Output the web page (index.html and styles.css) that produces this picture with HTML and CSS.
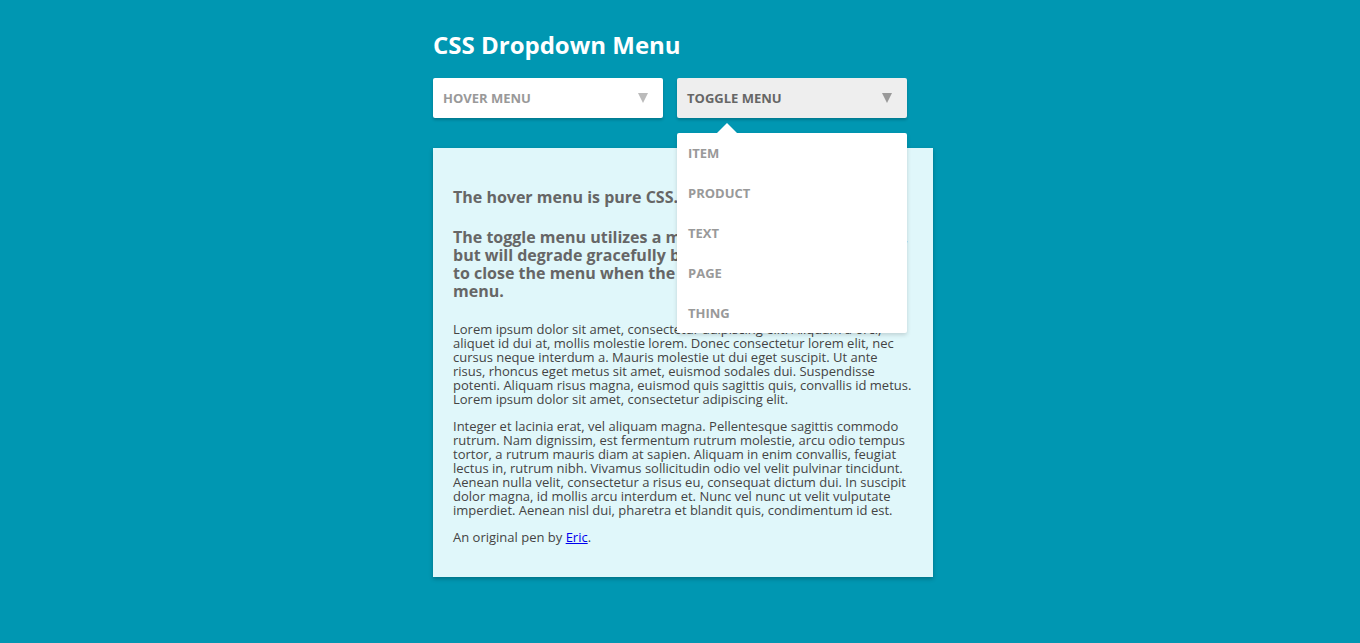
FILE: index.html
```html
<!DOCTYPE html>
<html>
<head>
<meta charset="utf-8">
<link rel="stylesheet" href="styles.css">
</head>
<body>
<div class="wrap">
  <h1 class="title">CSS Dropdown Menu</h1>
  <div class="menus">
    <div class="menu hover">
      <span>Hover Menu</span>
      <span class="caret"></span>
    </div>
    <div class="menu toggle">
      <span>Toggle Menu</span>
      <span class="caret"></span>
      <ul class="dropdown">
        <li>Item</li>
        <li>Product</li>
        <li>Text</li>
        <li>Page</li>
        <li>Thing</li>
      </ul>
    </div>
  </div>
  <div class="content">
    <h3>The hover menu is pure CSS.</h3>
    <h3>The toggle menu utilizes a minimal amount of JavaScript,<br>but will degrade gracefully back to a hover. JavaScript<br>to close the menu when the user clicks off the<br>menu.</h3>
    <p>Lorem ipsum dolor sit amet, consectetur adipiscing elit. Aliquam a orci, aliquet id dui at, mollis molestie lorem. Donec consectetur lorem elit, nec cursus neque interdum a. Mauris molestie ut dui eget suscipit. Ut ante risus, rhoncus eget metus sit amet, euismod sodales dui. Suspendisse potenti. Aliquam risus magna, euismod quis sagittis quis, convallis id metus. Lorem ipsum dolor sit amet, consectetur adipiscing elit.</p>
    <p>Integer et lacinia erat, vel aliquam magna. Pellentesque sagittis commodo rutrum. Nam dignissim, est fermentum rutrum molestie, arcu odio tempus tortor, a rutrum mauris diam at sapien. Aliquam in enim convallis, feugiat lectus in, rutrum nibh. Vivamus sollicitudin odio vel velit pulvinar tincidunt. Aenean nulla velit, consectetur a risus eu, consequat dictum dui. In suscipit dolor magna, id mollis arcu interdum et. Nunc vel nunc ut velit vulputate imperdiet. Aenean nisl dui, pharetra et blandit quis, condimentum id est.</p>
    <p>An original pen by <a href="#">Eric</a>.</p>
  </div>
</div>
</body>
</html>
```

FILE: styles.css
```css
html, body {
  margin: 0;
  padding: 0;
}
body {
  background: #0097b2;
  font-family: "Open Sans", "Liberation Sans", sans-serif;
  height: 643px;
  overflow: hidden;
}
.wrap {
  width: 500px;
  margin-left: 433px;
  padding-top: 28px;
}
.title {
  margin: 0;
  font-size: 24px;
  line-height: 33px;
  font-weight: 700;
  color: #fff;
}
.menus {
  display: flex;
  gap: 14px;
  margin-top: 17px;
}
.menu {
  position: relative;
  width: 230px;
  height: 40px;
  box-sizing: border-box;
  padding: 0 15px 0 10px;
  display: flex;
  align-items: center;
  justify-content: space-between;
  font-size: 13px;
  font-weight: 700;
  text-transform: uppercase;
  border-radius: 2px;
  box-shadow: 0 2px 3px rgba(0, 0, 0, 0.2);
}
.hover {
  background: #fff;
  color: #999;
}
.toggle {
  background: #eee;
  color: #666;
}
.caret {
  width: 0;
  height: 0;
  border-left: 5.5px solid transparent;
  border-right: 5.5px solid transparent;
  border-top: 10px solid #bbb;
}
.toggle .caret {
  border-top-color: #999;
}
.dropdown {
  position: absolute;
  top: 55px;
  left: 0;
  width: 230px;
  margin: 0;
  padding: 0;
  list-style: none;
  background: #fff;
  border-radius: 2px;
  box-shadow: 0 2px 4px rgba(0, 0, 0, 0.15);
  z-index: 5;
}
.dropdown::before {
  content: "";
  position: absolute;
  top: -10px;
  left: 40px;
  border-left: 10px solid transparent;
  border-right: 10px solid transparent;
  border-bottom: 10px solid #fff;
}
.dropdown li {
  height: 40px;
  line-height: 41px;
  padding-left: 11px;
  color: #999;
  font-size: 13px;
  font-weight: 700;
  text-transform: uppercase;
}
.content {
  margin-top: 30px;
  background: #e0f7fa;
  padding: 18px 20px 20px 20px;
  box-shadow: 0 2px 4px rgba(0, 0, 0, 0.25);
  color: #444;
}
.content h3 {
  margin: 22px 0;
  font-size: 16px;
  line-height: 18px;
  font-weight: 700;
  color: #666;
}
.content p {
  margin: 13px 0;
  font-size: 13px;
  line-height: 14px;
}
.content a {
  color: #00e;
}
```
